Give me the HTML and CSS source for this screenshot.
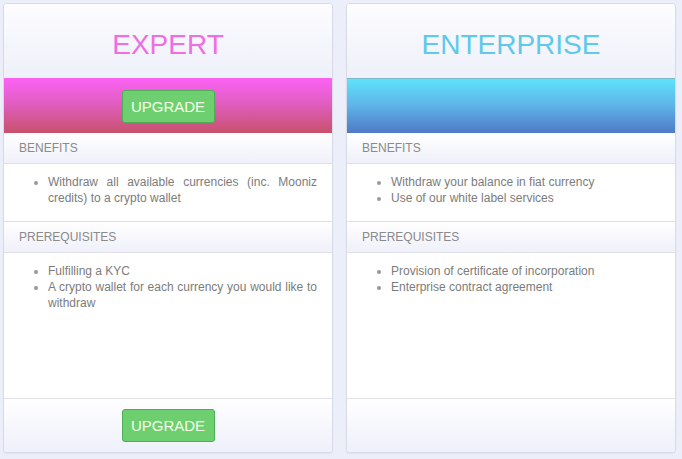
FILE: index.html
```html
<!DOCTYPE html>
<html lang="en">

<head>
    <meta charset="UTF-8">
    <meta name="viewport" content="width=device-width, initial-scale=1.0">
    <title>Account Levels</title>
    <link rel="stylesheet" href="styles.css">
</head>

<body>
    <div class="plans">
        <div class="plan plan-expert">
            <div class="plan-head">
                <h2 class="plan-title">EXPERT</h2>
            </div>
            <div class="plan-band">
                <button class="btn-upgrade">UPGRADE</button>
            </div>
            <div class="plan-label">BENEFITS</div>
            <ul class="plan-list">
                <li>Withdraw all available currencies (inc. Mooniz credits) to a crypto wallet</li>
            </ul>
            <div class="plan-label">PREREQUISITES</div>
            <ul class="plan-list plan-list-grow">
                <li>Fulfilling a KYC</li>
                <li>A crypto wallet for each currency you would like to withdraw</li>
            </ul>
            <div class="plan-foot">
                <button class="btn-upgrade">UPGRADE</button>
            </div>
        </div>

        <div class="plan plan-enterprise">
            <div class="plan-head">
                <h2 class="plan-title">ENTERPRISE</h2>
            </div>
            <div class="plan-band"></div>
            <div class="plan-label">BENEFITS</div>
            <ul class="plan-list">
                <li>Withdraw your balance in fiat currency</li>
                <li>Use of our white label services</li>
            </ul>
            <div class="plan-label">PREREQUISITES</div>
            <ul class="plan-list plan-list-grow">
                <li>Provision of certificate of incorporation</li>
                <li>Enterprise contract agreement</li>
            </ul>
            <div class="plan-foot"></div>
        </div>
    </div>
</body>

</html>
```

FILE: styles.css
```css
html, body {
    margin: 0;
    padding: 0;
    height: 100%;
    background: #eceef9;
    font-family: 'Liberation Sans', Arial, sans-serif;
    color: #808080;
}

body {
    padding: 3px 6px 6px 3px;
    box-sizing: border-box;
}

.plans {
    display: flex;
    gap: 13px;
    height: 100%;
}

.plan {
    flex: 1;
    display: flex;
    flex-direction: column;
    background: #ffffff;
    border: 1px solid #d9dbe7;
    border-radius: 4px;
    box-shadow: 0 1px 2px rgba(0, 0, 0, 0.05);
    overflow: hidden;
}

.plan-head {
    height: 74px;
    display: flex;
    align-items: center;
    justify-content: center;
    padding-top: 8px;
    box-sizing: border-box;
    background: linear-gradient(to bottom, #fdfdff, #eef0fa);
}

.plan-title {
    margin: 0;
    font-size: 28px;
    font-weight: 400;
}

.plan-expert .plan-title {
    color: #ef6ee2;
}

.plan-enterprise .plan-title {
    color: #5fc9e9;
}

.plan-band {
    height: 55px;
    display: flex;
    align-items: center;
    justify-content: center;
    padding-top: 2px;
    box-sizing: border-box;
}

.plan-expert .plan-band {
    background: linear-gradient(to bottom, #fb62f5, #e15ec2 45%, #c8516c);
}

.plan-enterprise .plan-band {
    border-top: 1px solid #7ab8c8;
    background: linear-gradient(to bottom, #5ee2fb, #5fb8ea 45%, #4f7ac6);
}

.btn-upgrade {
    width: 93px;
    height: 33px;
    padding: 0;
    background: #6dcf6f;
    border: 1px solid #4fae55;
    border-radius: 3px;
    color: #f6ffe8;
    font-family: inherit;
    font-size: 15px;
    cursor: pointer;
}

.plan-label {
    height: 31px;
    padding: 0 15px;
    display: flex;
    align-items: center;
    box-sizing: border-box;
    border-bottom: 1px solid #dfe0ea;
    background: linear-gradient(to bottom, #ffffff, #eff0fa);
    font-size: 12px;
    color: #8a8a8a;
}

.plan-list {
    margin: 0;
    padding: 10px 15px 15px 44px;
    border-bottom: 1px solid #dfe0ea;
    font-size: 12px;
    line-height: 16px;
    text-align: justify;
    color: #7c7c7c;
}

.plan-list li::marker {
    color: #999;
}

.plan-list-grow {
    flex: 1;
}

.plan-foot {
    height: 53px;
    display: flex;
    align-items: center;
    justify-content: center;
    background: linear-gradient(to bottom, #ffffff, #eef0fb);
}
```
